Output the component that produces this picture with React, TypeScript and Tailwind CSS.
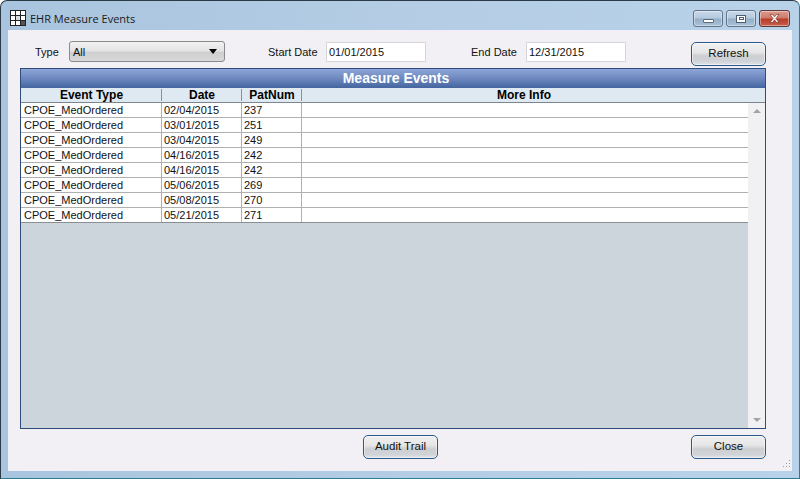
const rows = [
  ["CPOE_MedOrdered", "02/04/2015", "237"],
  ["CPOE_MedOrdered", "03/01/2015", "251"],
  ["CPOE_MedOrdered", "03/04/2015", "249"],
  ["CPOE_MedOrdered", "04/16/2015", "242"],
  ["CPOE_MedOrdered", "04/16/2015", "242"],
  ["CPOE_MedOrdered", "05/06/2015", "269"],
  ["CPOE_MedOrdered", "05/08/2015", "270"],
  ["CPOE_MedOrdered", "05/21/2015", "271"],
];

const AeroButton = ({ label, className }: { label: string; className?: string }) => {
  return (
    <div
      className={`flex h-[24px] w-[75px] items-center justify-center rounded-[5px] border border-[#2a5a8c] bg-[linear-gradient(180deg,#f0f0f1_0%,#e6e6e7_42%,#cdcfd2_58%,#d0d3d7_85%,#e2e5e8_100%)] text-[11.5px] text-[#111] shadow-[inset_0_0_0_1px_#ffffff77] ${className ?? ""}`}
    >
      {label}
    </div>
  );
};

const WinButton = ({ red, children, className }: { red?: boolean; children: React.ReactNode; className?: string }) => {
  return (
    <div
      className={`flex h-[17px] items-center justify-center rounded-[3px] border ${
        red
          ? "border-[#5c3a38] bg-[linear-gradient(180deg,#dc9a8e_0%,#cc7b6c_48%,#b83a28_52%,#c9604c_100%)]"
          : "border-[#5f7488] bg-[linear-gradient(180deg,#c9d9e9_0%,#b4c9de_48%,#95aec8_52%,#a9c1d8_100%)]"
      } shadow-[inset_0_0_0_1px_#ffffff66] ${className ?? ""}`}
    >
      {children}
    </div>
  );
};

const GridIcon = () => (
  <svg width="16" height="16" viewBox="0 0 16 16" className="mt-[9px] shrink-0">
    <rect x="0.5" y="0.5" width="15" height="15" fill="#fff" stroke="#222" />
    <rect x="6" y="6" width="4" height="4" fill="#ddd" />
    <rect x="11" y="11" width="4" height="4" fill="#555" />
    <path d="M5.5 0v16M10.5 0v16M0 5.5h16M0 10.5h16" stroke="#222" />
  </svg>
);

const App = () => {
  return (
    <div className="flex h-[479px] w-[800px] flex-col overflow-hidden rounded-t-[7px] border border-[#2c3a45] border-b-[#2a7f8f] border-r-[#2a7f8f] bg-[linear-gradient(90deg,#a9c4de_0%,#b4cde5_50%,#b8d2ea_100%)] font-['Liberation_Sans',sans-serif] text-[11px] text-[#111]">
      <div className="flex h-[29px] shrink-0 items-start pl-[9px] pr-[9px]">
        <GridIcon />
        <span className="ml-[4px] mt-[10px] font-['Open_Sans',sans-serif] text-[11px] leading-[16px] text-[#1a1a1a]">EHR Measure Events</span>
        <div className="ml-auto mt-[9px] flex gap-[3px]">
          <WinButton className="w-[30px]">
            <div className="mt-[4px] h-[4px] w-[11px] rounded-[1px] border border-[#5a6b7c] bg-white" />
          </WinButton>
          <WinButton className="w-[30px]">
            <div className="flex h-[8px] w-[10px] items-center justify-center border border-[#4d5e70] bg-white">
              <div className="h-[3px] w-[5px] border border-[#4d5e70]" />
            </div>
          </WinButton>
          <WinButton red className="w-[31px]">
            <svg width="13" height="11" viewBox="0 0 13 11">
              <path d="M2 1.5h2.5l2 2.3 2-2.3H11L8 5.5l3 4H8.5l-2-2.5-2 2.5H2l3-4z" fill="#f4f0ee" stroke="#6e2a20" strokeWidth="0.6" />
            </svg>
          </WinButton>
        </div>
      </div>
      <div className="mx-[7px] mb-[7px] flex flex-1 flex-col bg-[#f2f0f5] pl-[12px] pr-[26px]">
        <div className="flex h-[38px] shrink-0">
          <span className="ml-[15px] mt-[14px] w-[23px]">Type</span>
          <div className="relative ml-[11px] mt-[11px] flex h-[21px] w-[156px] items-center rounded-[3px] border border-[#8a8a8a] bg-[linear-gradient(180deg,#f2f2f2_0%,#e4e4e4_45%,#cfcfcf_55%,#d8d8d8_100%)] pl-[3px] pt-[1px]">
            All
            <div className="absolute right-[7px] top-[7px] h-0 w-0 border-x-[4px] border-t-[5px] border-x-transparent border-t-black" />
          </div>
          <span className="ml-[43px] mt-[14px] w-[58px]">Start Date</span>
          <div className="mt-[12px] flex h-[20px] w-[100px] items-center border border-[#d5d5d8] bg-white pl-[2px]">01/01/2015</div>
          <span className="ml-[45px] mt-[14px] w-[55px]">End Date</span>
          <div className="mt-[12px] flex h-[20px] w-[100px] items-center border border-[#d5d5d8] bg-white pl-[2px]">12/31/2015</div>
          <AeroButton label="Refresh" className="ml-auto mt-[12px]" />
        </div>
        <div className="flex h-[361px] shrink-0 flex-col border border-[#2f4d7c] bg-[#cdd5dc]">
          <div className="flex h-[19px] shrink-0 items-center justify-center bg-[linear-gradient(180deg,#8ea6d8_0%,#6d88bf_50%,#44659f_100%)] pl-[6px] text-[14px] font-bold text-white">
            Measure Events
          </div>
          <div className="flex h-[15px] shrink-0 border-b border-[#7d8590] bg-[#dfe9f1] pr-[19px] text-[12px] font-bold leading-[14px] text-black">
            <div className="relative w-[141px] text-center">
              Event Type
              <div className="absolute bottom-[1px] right-0 top-[1px] w-px bg-[#8a8f96]" />
            </div>
            <div className="relative w-[80px] text-center">
              Date
              <div className="absolute bottom-[1px] right-0 top-[1px] w-px bg-[#8a8f96]" />
            </div>
            <div className="relative w-[60px] text-center">
              PatNum
              <div className="absolute bottom-[1px] right-0 top-[1px] w-px bg-[#8a8f96]" />
            </div>
            <div className="flex-1 text-center">More Info</div>
          </div>
          <div className="flex min-h-0 flex-1">
            <div className="flex-1">
              {rows.map((row, i) => (
                <div key={i} className="flex h-[15px] border-b border-[#b0b0b0] bg-white leading-[14px] last:border-[#8a8f96]">
                  <div className="w-[141px] border-r border-[#b0b0b0] pl-[3px]">{row[0]}</div>
                  <div className="w-[80px] border-r border-[#b0b0b0] pl-[2px]">{row[1]}</div>
                  <div className="w-[60px] border-r border-[#b0b0b0] pl-[2px]">{row[2]}</div>
                  <div className="flex-1" />
                </div>
              ))}
            </div>
            <div className="flex w-[17px] shrink-0 flex-col items-center justify-between bg-[#f1f1f3] pb-[6px] pt-[6px]">
              <div className="h-0 w-0 border-x-[4px] border-b-[4px] border-x-transparent border-b-[#a0a4a8]" />
              <div className="h-0 w-0 border-x-[4px] border-t-[4px] border-x-transparent border-t-[#a0a4a8]" />
            </div>
          </div>
        </div>
        <div className="relative flex flex-1 items-start pt-[6px]">
          <AeroButton label="Audit Trail" className="ml-[343px]" />
          <AeroButton label="Close" className="ml-auto" />
          <svg width="11" height="11" viewBox="0 0 11 11" className="absolute bottom-[1px] right-[-25px]">
            <path d="M9 1h1v1H9zM6 4h1v1H6zM9 4h1v1H9zM3 7h1v1H3zM6 7h1v1H6zM9 7h1v1H9z" fill="#9a9ea6" />
          </svg>
        </div>
      </div>
    </div>
  );
};

export default App;
